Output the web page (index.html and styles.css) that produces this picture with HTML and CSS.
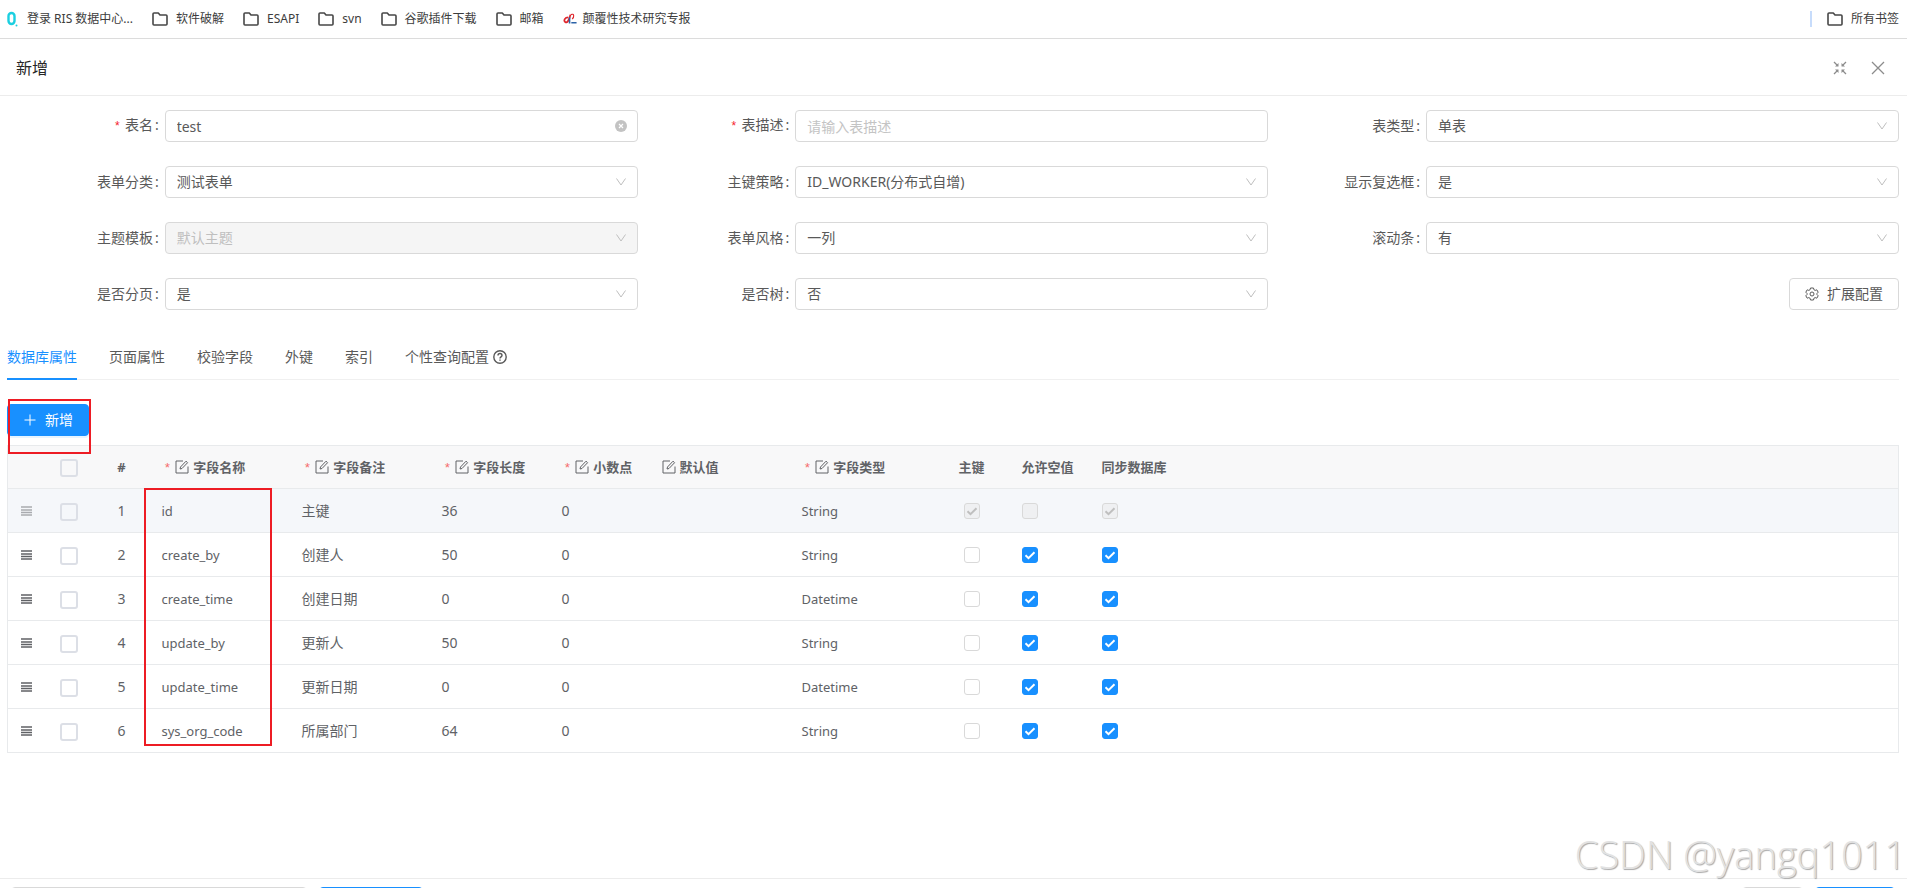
FILE: index.html
```html
<!DOCTYPE html>
<html lang="zh-CN">
<head>
	<meta charset="UTF-8">
	<meta name="viewport" content="width=device-width, initial-scale=1.0">
	<title>新增</title>
	<link rel="stylesheet" href="styles.css">
</head>
<body>
	<!-- 公用图标 -->
	<svg class="sprite" aria-hidden="true">
		<symbol id="folder" viewBox="0 0 16 16">
			<path d="M1 3c0-.6.4-1 1-1h4.300l1.700 2h6c.6 0 1 .4 1 1v8c0 .6-.4 1-1 1H2c-.6 0-1-.4-1-1z" fill="none" stroke="#474747" stroke-width="1.600" stroke-linejoin="round"/>
		</symbol>
		<symbol id="down" viewBox="0 0 12 12">
			<path d="M1.500 2.500L6 9l4.500-6.500" fill="none" stroke="currentColor"/>
		</symbol>
		<symbol id="edit" viewBox="0 0 14 14">
			<path d="M8 1H1v12h12V6.500M5 9l.5-2L11 1.200l1.600 1.500L7 8.500z" fill="none" stroke="currentColor"/>
		</symbol>
		<symbol id="drag" viewBox="0 0 11 10">
			<path d="M0 1h11M0 4h11M0 6.500h11M0 9h11" fill="none" stroke="currentColor" stroke-width="1.500"/>
		</symbol>
	</svg>

	<nav class="bookmarks">
		<a href="#">
			<svg class="icon" viewBox="0 0 16 16"><rect x="5.500" y="2" width="6" height="11" rx="3" fill="none" stroke="#1bcfe0" stroke-width="2.400"/><circle cx="13.500" cy="14.500" r="1" fill="#1bcfe0"/></svg>
			登录 RIS 数据中心...
		</a>
		<a href="#"><svg class="icon"><use href="#folder"/></svg>软件破解</a>
		<a href="#"><svg class="icon"><use href="#folder"/></svg>ESAPI</a>
		<a href="#"><svg class="icon"><use href="#folder"/></svg>svn</a>
		<a href="#"><svg class="icon"><use href="#folder"/></svg>谷歌插件下载</a>
		<a href="#"><svg class="icon"><use href="#folder"/></svg>邮箱</a>
		<a href="#" class="report">
			<svg class="icon" viewBox="0 0 16 16"><path d="M6 6C2 6 .5 10 2.500 11.500S7 10 8.500 3" fill="none" stroke="#e0262c" stroke-width="2"/><path d="M9 3c4-2 4 3 1.500 5" fill="none" stroke="#e0262c" stroke-width="1.300"/><path d="M7.500 6v7M9.500 12.300h6" fill="none" stroke="#2b62a8" stroke-width="1.800"/></svg>
			颠覆性技术研究专报
		</a>
		<a href="#" class="all"><svg class="icon"><use href="#folder"/></svg>所有书签</a>
	</nav>

	<header class="modal-header">
		<h1>新增</h1>
		<button type="button" aria-label="还原">
			<svg viewBox="0 0 16 16"><path d="M2 2l3.500 3.500M14 2l-3.500 3.500M2 14l3.500-3.500M14 14l-3.500-3.500" fill="none" stroke="currentColor" stroke-width="1.300"/><path d="M6.500 6.500H3l3.500-3.500zM9.500 6.500H13L9.500 3zM6.500 9.500H3L6.500 13zM9.500 9.500H13L9.500 13z" fill="currentColor"/></svg>
		</button>
		<button type="button" aria-label="关闭">
			<svg viewBox="0 0 16 16"><path d="M2 2l12 12M14 2L2 14" fill="none" stroke="currentColor" stroke-width="1.300"/></svg>
		</button>
	</header>

	<main>
		<form class="form">
			<div class="item">
				<label for="tableName" class="required">表名</label>
				<div class="control">
					<input type="text" id="tableName" value="test">
					<svg class="suffix" viewBox="0 0 12 12"><circle cx="6" cy="6" r="6" fill="#c3c3c3"/><path d="M4 4l4 4M8 4l-4 4" stroke="#fff" stroke-width="1.200"/></svg>
				</div>
			</div>
			<div class="item">
				<label for="tableTxt" class="required">表描述</label>
				<div class="control">
					<input type="text" id="tableTxt" placeholder="请输入表描述">
				</div>
			</div>
			<div class="item">
				<label for="tableType">表类型</label>
				<div class="control">
					<select id="tableType"><option>单表</option></select>
					<svg class="suffix"><use href="#down"/></svg>
				</div>
			</div>
			<div class="item">
				<label for="category">表单分类</label>
				<div class="control">
					<select id="category"><option>测试表单</option></select>
					<svg class="suffix"><use href="#down"/></svg>
				</div>
			</div>
			<div class="item">
				<label for="idType">主键策略</label>
				<div class="control">
					<select id="idType"><option>ID_WORKER(分布式自增)</option></select>
					<svg class="suffix"><use href="#down"/></svg>
				</div>
			</div>
			<div class="item">
				<label for="showCheckbox">显示复选框</label>
				<div class="control">
					<select id="showCheckbox"><option>是</option></select>
					<svg class="suffix"><use href="#down"/></svg>
				</div>
			</div>
			<div class="item">
				<label for="theme">主题模板</label>
				<div class="control">
					<select id="theme" disabled><option>默认主题</option></select>
					<svg class="suffix"><use href="#down"/></svg>
				</div>
			</div>
			<div class="item">
				<label for="formStyle">表单风格</label>
				<div class="control">
					<select id="formStyle"><option>一列</option></select>
					<svg class="suffix"><use href="#down"/></svg>
				</div>
			</div>
			<div class="item">
				<label for="scroll">滚动条</label>
				<div class="control">
					<select id="scroll"><option>有</option></select>
					<svg class="suffix"><use href="#down"/></svg>
				</div>
			</div>
			<div class="item">
				<label for="paging">是否分页</label>
				<div class="control">
					<select id="paging"><option>是</option></select>
					<svg class="suffix"><use href="#down"/></svg>
				</div>
			</div>
			<div class="item">
				<label for="isTree">是否树</label>
				<div class="control">
					<select id="isTree"><option>否</option></select>
					<svg class="suffix"><use href="#down"/></svg>
				</div>
			</div>
			<div class="item end">
				<button type="button" class="btn">
					<svg viewBox="0 0 14 14"><path d="M5.500 1h3l.4 1.700 1.300.7 1.600-.6 1.400 2.400-1.200 1.200v1.200l1.200 1.200-1.400 2.400-1.600-.6-1.300.7-.4 1.700h-3l-.4-1.700-1.300-.7-1.600.6-1.400-2.400L2 7.600V6.400L.8 5.200l1.400-2.400 1.600.6 1.300-.7z" fill="none" stroke="currentColor"/><circle cx="7" cy="7" r="2" fill="none" stroke="currentColor"/></svg>
					扩展配置
				</button>
			</div>
		</form>

		<nav class="tabs">
			<a href="#" class="active">数据库属性</a>
			<a href="#">页面属性</a>
			<a href="#">校验字段</a>
			<a href="#">外键</a>
			<a href="#">索引</a>
			<a href="#">个性查询配置
				<svg viewBox="0 0 14 14"><circle cx="7" cy="7" r="6.200" fill="none" stroke="currentColor" stroke-width="1.400"/><path d="M5 5.500c0-2.600 4-2.600 4 0 0 1.400-2 1.400-2 3M7 9.500v1.300" fill="none" stroke="currentColor" stroke-width="1.400"/></svg>
			</a>
		</nav>

		<div class="toolbar">
			<button type="button" class="btn primary">
				<svg viewBox="0 0 14 14"><path d="M7 1.500v11M1.500 7h11" stroke="currentColor"/></svg>
				新增
			</button>
			<span class="mark mark-button"></span>
		</div>

		<div class="table-wrap">
			<table>
				<colgroup>
					<col class="w-drag"><col class="w-select"><col class="w-index">
					<col class="w-140"><col class="w-140"><col class="w-120"><col class="w-100">
					<col class="w-140"><col class="w-140"><col class="w-80"><col class="w-80"><col>
				</colgroup>
				<thead>
					<tr>
						<th></th>
						<th class="center"><input type="checkbox" class="pick" aria-label="全选"></th>
						<th class="center">#</th>
						<th><span class="th"><i>*</i><svg><use href="#edit"/></svg>字段名称</span></th>
						<th><span class="th"><i>*</i><svg><use href="#edit"/></svg>字段备注</span></th>
						<th><span class="th"><i>*</i><svg><use href="#edit"/></svg>字段长度</span></th>
						<th><span class="th"><i>*</i><svg><use href="#edit"/></svg>小数点</span></th>
						<th><span class="th"><svg><use href="#edit"/></svg>默认值</span></th>
						<th><span class="th"><i>*</i><svg><use href="#edit"/></svg>字段类型</span></th>
						<th class="center">主键</th>
						<th>允许空值</th>
						<th>同步数据库</th>
					</tr>
				</thead>
				<tbody>
					<tr class="locked">
						<td class="center"><svg class="drag"><use href="#drag"/></svg></td>
						<td class="center"><input type="checkbox" class="pick" aria-label="选择 id"></td>
						<td class="center">1</td>
						<td class="code">id</td>
						<td>主键</td>
						<td>36</td>
						<td>0</td>
						<td></td>
						<td class="code">String</td>
						<td class="center"><input type="checkbox" class="check" aria-label="主键" checked disabled></td>
						<td><input type="checkbox" class="check" aria-label="允许空值" disabled></td>
						<td><input type="checkbox" class="check" aria-label="同步数据库" checked disabled></td>
					</tr>
					<tr>
						<td class="center"><svg class="drag"><use href="#drag"/></svg></td>
						<td class="center"><input type="checkbox" class="pick" aria-label="选择 create_by"></td>
						<td class="center">2</td>
						<td class="code">create_by</td>
						<td>创建人</td>
						<td>50</td>
						<td>0</td>
						<td></td>
						<td class="code">String</td>
						<td class="center"><input type="checkbox" class="check" aria-label="主键"></td>
						<td><input type="checkbox" class="check" aria-label="允许空值" checked></td>
						<td><input type="checkbox" class="check" aria-label="同步数据库" checked></td>
					</tr>
					<tr>
						<td class="center"><svg class="drag"><use href="#drag"/></svg></td>
						<td class="center"><input type="checkbox" class="pick" aria-label="选择 create_time"></td>
						<td class="center">3</td>
						<td class="code">create_time</td>
						<td>创建日期</td>
						<td>0</td>
						<td>0</td>
						<td></td>
						<td class="code">Datetime</td>
						<td class="center"><input type="checkbox" class="check" aria-label="主键"></td>
						<td><input type="checkbox" class="check" aria-label="允许空值" checked></td>
						<td><input type="checkbox" class="check" aria-label="同步数据库" checked></td>
					</tr>
					<tr>
						<td class="center"><svg class="drag"><use href="#drag"/></svg></td>
						<td class="center"><input type="checkbox" class="pick" aria-label="选择 update_by"></td>
						<td class="center">4</td>
						<td class="code">update_by</td>
						<td>更新人</td>
						<td>50</td>
						<td>0</td>
						<td></td>
						<td class="code">String</td>
						<td class="center"><input type="checkbox" class="check" aria-label="主键"></td>
						<td><input type="checkbox" class="check" aria-label="允许空值" checked></td>
						<td><input type="checkbox" class="check" aria-label="同步数据库" checked></td>
					</tr>
					<tr>
						<td class="center"><svg class="drag"><use href="#drag"/></svg></td>
						<td class="center"><input type="checkbox" class="pick" aria-label="选择 update_time"></td>
						<td class="center">5</td>
						<td class="code">update_time</td>
						<td>更新日期</td>
						<td>0</td>
						<td>0</td>
						<td></td>
						<td class="code">Datetime</td>
						<td class="center"><input type="checkbox" class="check" aria-label="主键"></td>
						<td><input type="checkbox" class="check" aria-label="允许空值" checked></td>
						<td><input type="checkbox" class="check" aria-label="同步数据库" checked></td>
					</tr>
					<tr>
						<td class="center"><svg class="drag"><use href="#drag"/></svg></td>
						<td class="center"><input type="checkbox" class="pick" aria-label="选择 sys_org_code"></td>
						<td class="center">6</td>
						<td class="code">sys_org_code</td>
						<td>所属部门</td>
						<td>64</td>
						<td>0</td>
						<td></td>
						<td class="code">String</td>
						<td class="center"><input type="checkbox" class="check" aria-label="主键"></td>
						<td><input type="checkbox" class="check" aria-label="允许空值" checked></td>
						<td><input type="checkbox" class="check" aria-label="同步数据库" checked></td>
					</tr>
				</tbody>
			</table>
			<span class="mark mark-column"></span>
		</div>
	</main>

	<footer class="modal-footer">
		<select class="wide" aria-label="模板"></select>
		<button type="button" class="btn primary middle" aria-label="应用"></button>
		<button type="button" class="btn cancel" aria-label="关闭"></button>
		<button type="button" class="btn primary ok" aria-label="确定"></button>
	</footer>
	<div class="watermark">CSDN @yangq1011</div>
</body>
</html>
```
FILE: styles.css
```css
* {
	box-sizing: border-box;
}
body {
	display: flex;
	flex-direction: column;
	position: relative;
	height: 100vh;
	margin: 0;
	overflow: hidden;
	background: #fff;
	color: #595959;
	font: 14px/22px "Noto Sans", "Noto Sans CJK SC", sans-serif;
}
a {
	color: inherit;
	text-decoration: none;
}
input,
select,
button {
	margin: 0;
	color: inherit;
	font: inherit;
}
.sprite {
	position: absolute;
	width: 0;
	height: 0;
}

/* 书签栏 */
.bookmarks {
	display: flex;
	align-items: center;
	gap: 19px;
	height: 39px;
	padding: 0 8px 0 3px;
	border-bottom: 1px solid #dcdcdc;
	color: #3c3c3c;
	font-size: 12px;
	white-space: nowrap;
}
.bookmarks a {
	display: flex;
	align-items: center;
	gap: 8px;
}
.bookmarks .icon {
	width: 16px;
	height: 16px;
}
.bookmarks .report {
	gap: 6px;
}
.report .icon {
	width: 14px;
}
.bookmarks .all {
	margin-left: auto;
	padding-left: 17px;
	background: linear-gradient(#c7dcfb, #c7dcfb) left center / 2px 16px no-repeat;
}

/* 弹窗标题 */
.modal-header {
	display: flex;
	align-items: center;
	gap: 22px;
	height: 57px;
	padding: 2px 21px 0 16px;
	border-bottom: 1px solid #ececec;
}
.modal-header h1 {
	margin: 0 auto 0 0;
	color: #262626;
	font-size: 16px;
	font-weight: 400;
}
.modal-header button {
	height: 16px;
	padding: 0;
	border: 0;
	background: none;
	color: #8c8c8c;
}
.modal-header svg {
	display: block;
	width: 16px;
	height: 16px;
}

main {
	flex: 1;
	padding: 14px 8px 0 7px;
}

/* 表单 */
.form {
	display: grid;
	grid-template-columns: repeat(3, 1fr);
	row-gap: 24px;
}
.item {
	display: flex;
	align-items: center;
}
.item label {
	width: 25%;
	padding-right: 6px;
	text-align: right;
}
.item label::after {
	content: ":";
	margin-left: 2px;
}
.required::before {
	content: "*";
	margin-right: 4px;
	color: #f5222d;
	font-family: "Liberation Mono", monospace;
	font-size: 12px;
}
.control {
	position: relative;
	width: 75%;
}
.control input,
.control select {
	display: block;
	width: 100%;
	height: 32px;
	padding: 0 11px;
	border: 1px solid #d9d9d9;
	border-radius: 4px;
	background: #fff;
	-webkit-appearance: none;
	appearance: none;
}
.control ::placeholder {
	color: #c4c4c4;
}
.control select:disabled {
	background: #f5f5f5;
	color: #bfbfbf;
	opacity: 1;
}
.suffix {
	position: absolute;
	top: 10px;
	right: 11px;
	width: 12px;
	height: 12px;
	color: #bfbfbf;
	pointer-events: none;
}
.end {
	justify-content: flex-end;
}
.btn {
	display: flex;
	align-items: center;
	gap: 8px;
	height: 32px;
	padding: 0 15px;
	border: 1px solid #d9d9d9;
	border-radius: 4px;
	background: #fff;
}
.btn svg {
	width: 14px;
	height: 14px;
}
.primary {
	border-color: #1890ff;
	background: #1890ff;
	box-shadow: 0 2px 0 rgba(24, 144, 255, .1);
	color: #fff;
}

/* 标签页 */
.tabs {
	display: flex;
	gap: 32px;
	margin: 24px 0;
	border-bottom: 1px solid #f0f0f0;
}
.tabs a {
	display: flex;
	align-items: center;
	gap: 4px;
	height: 46px;
	margin-bottom: -1px;
}
.tabs svg {
	width: 14px;
	height: 14px;
}
.tabs .active {
	box-shadow: inset 0 -2px #1890ff;
	color: #1890ff;
}

.toolbar {
	display: flex;
	position: relative;
	margin-bottom: 9px;
}

/* 红框标注 */
.mark {
	position: absolute;
	border: 2px solid #ed1c24;
	pointer-events: none;
}
.mark-button {
	z-index: 1;
	top: -5px;
	left: 1px;
	width: 83px;
	height: 55px;
}
.mark-column {
	top: 43px;
	left: 137px;
	width: 128px;
	height: 258px;
}

/* 字段表格 */
.table-wrap {
	position: relative;
}
table {
	width: 100%;
	border: 1px solid #e8eaec;
	border-collapse: collapse;
	table-layout: fixed;
	color: #606266;
}
th,
td {
	height: 44px;
	padding: 0 10px;
	border-bottom: 1px solid #e8eaec;
	text-align: left;
	white-space: nowrap;
}
th {
	height: 43px;
	background: #f8f8f9;
	font-size: 13px;
	font-weight: 700;
}
.code {
	font-size: 13px;
}
.center {
	padding: 0;
	text-align: center;
}
.th {
	display: flex;
	align-items: center;
	gap: 4px;
}
.th i {
	padding: 4px 0 0 2px;
	color: #f56c6c;
	font: 400 13px/22px "Liberation Mono", monospace;
}
.th svg {
	width: 14px;
	height: 14px;
}
.w-drag { width: 38px; }
.w-select { width: 46px; }
.w-index { width: 60px; }
.w-80 { width: 80px; }
.w-100 { width: 100px; }
.w-120 { width: 120px; }
.w-140 { width: 140px; }
.drag {
	display: block;
	width: 11px;
	height: 10px;
	margin: 0 auto;
}
.locked {
	background: #f5f7fa;
}
.locked .drag {
	opacity: .5;
}
.pick,
.check {
	-webkit-appearance: none;
	appearance: none;
	width: 16px;
	height: 16px;
	border: 1px solid #d9d9d9;
	border-radius: 3px;
	background: #fff center / 16px 16px no-repeat;
}
.pick {
	width: 18px;
	height: 18px;
	border: 2px solid #dcdfe6;
	background: transparent;
	vertical-align: middle;
}
.check {
	display: block;
}
.center .check {
	margin: 0 auto;
}
.check:checked {
	border-color: #1890ff;
	background-color: #1890ff;
	background-image: url("data:image/svg+xml,%3Csvg xmlns='http://www.w3.org/2000/svg' viewBox='0 0 16 16'%3E%3Cpath d='M3.500 8.200l3 3 6-6' fill='none' stroke='%23fff' stroke-width='2'/%3E%3C/svg%3E");
}
.check:disabled {
	border-color: #d9d9d9;
	background-color: #eff0f2;
}
.check:checked:disabled {
	background-image: url("data:image/svg+xml,%3Csvg xmlns='http://www.w3.org/2000/svg' viewBox='0 0 16 16'%3E%3Cpath d='M3.500 8.200l3 3 6-6' fill='none' stroke='%23bfbfbf' stroke-width='2'/%3E%3C/svg%3E");
}

/* 底部按钮 */
.modal-footer {
	display: flex;
	gap: 12px;
	height: 10px;
	padding: 8px 12px 0 11px;
	border-top: 1px solid #ececec;
	overflow: hidden;
}
.modal-footer .wide {
	width: 296px;
	height: 32px;
	border: 1px solid #d9d9d9;
	border-radius: 4px;
	background: #fff;
	-webkit-appearance: none;
	appearance: none;
}
.middle {
	width: 104px;
}
.cancel {
	width: 61px;
	margin-left: auto;
}
.ok {
	width: 80px;
}

.watermark {
	position: absolute;
	right: 1px;
	bottom: 9px;
	color: #e2e2e2;
	font: 300 38px/50px "Open Sans", sans-serif;
	text-shadow: 1px 1px 1px #a8a8a8;
	pointer-events: none;
}
```
